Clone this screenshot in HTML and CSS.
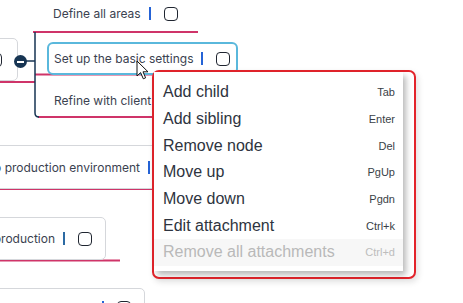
FILE: index.html
```html
<!DOCTYPE html>
<html lang="en">
<head>
  <meta charset="UTF-8">
  <title>Mind map</title>
  <link rel="stylesheet" href="styles.css">
</head>
<body>
  <div class="canvas">
    <!-- connectors -->
    <svg class="links" width="463" height="303" viewBox="0 0 463 303">
      <path class="link-pink" d="M0 82 H35" />
      <path class="link-pink" d="M33 32 H198" />
      <path class="link-pink" d="M35 74.5 H238" />
      <path class="link-pink" d="M38 117 H230" />
      <path class="link-pink" d="M0 189 H200" />
      <path class="link-pink" d="M0 260.5 H120" />
      <path class="link-dark" d="M26 61 H35" />
      <path class="link-dark" d="M35 32 V113 Q35 117 39 117" />
    </svg>

    <div class="node root">
      <span class="label">Website project</span>
      <span class="caret"></span>
      <span class="check"></span>
    </div>
    <div class="fold"></div>

    <div class="node child node-define">
      <span class="label">Define all areas</span>
      <span class="caret"></span>
      <span class="check"></span>
    </div>
    <div class="node child node-setup selected">
      <span class="label">Set up the basic settings</span>
      <span class="caret"></span>
      <span class="check"></span>
    </div>
    <div class="node child node-refine">
      <span class="label">Refine with client</span>
      <span class="caret"></span>
      <span class="check"></span>
    </div>

    <div class="node l1 node-env">
      <span class="label">Deploy to production environment</span>
      <span class="caret"></span>
      <span class="check"></span>
    </div>
    <div class="node l1 node-prod">
      <span class="label">Test in production</span>
      <span class="caret"></span>
      <span class="check"></span>
    </div>
    <div class="node l1 node-last">
      <span class="label">Hand the backups to the client over secure servers</span>
      <span class="caret"></span>
      <span class="check"></span>
    </div>

    <svg class="pointer" width="14" height="21" viewBox="0 0 14 21">
      <path d="M1 1 V16 L4.6 12.6 L7.3 18.8 L9.6 17.8 L7 11.8 L12 11.8 Z" />
    </svg>

    <div class="menu-wrap">
      <ul class="menu">
        <li class="menu-item"><span>Add child</span><span class="key">Tab</span></li>
        <li class="menu-item"><span>Add sibling</span><span class="key">Enter</span></li>
        <li class="menu-item"><span>Remove node</span><span class="key">Del</span></li>
        <li class="menu-item"><span>Move up</span><span class="key">PgUp</span></li>
        <li class="menu-item"><span>Move down</span><span class="key">Pgdn</span></li>
        <li class="menu-item"><span>Edit attachment</span><span class="key">Ctrl+k</span></li>
        <li class="menu-item disabled"><span>Remove all attachments</span><span class="key">Ctrl+d</span></li>
      </ul>
    </div>
  </div>
</body>
</html>
```

FILE: styles.css
```css
:root {
  --pink: #cf3469;
  --navy: #173553;
  --text-color: #3b4250;
  --caret: #2563d6;
  --node-border: #d5d7db;
  --menu-red: #e3242b;
}

body {
  margin: 0;
  background: #ffffff;
  font-family: Inter, "Noto Sans", sans-serif;
}

.canvas {
  position: relative;
  width: 463px;
  height: 303px;
  overflow: hidden;
  background: #ffffff;
}

.links {
  position: absolute;
  top: 0;
  left: 0;
}

.link-pink {
  fill: none;
  stroke: var(--pink);
  stroke-width: 2;
}

.link-dark {
  fill: none;
  stroke: var(--navy);
  stroke-width: 1.5;
}

/* nodes */
.node {
  position: absolute;
  display: flex;
  align-items: center;
  box-sizing: border-box;
  white-space: nowrap;
  font-size: 12px;
  color: var(--text-color);
  background: #ffffff;
}

.caret {
  width: 2px;
  height: 13px;
  margin-left: 8px;
  background: var(--caret);
}

.check {
  width: 14px;
  height: 14px;
  margin-left: 13px;
  box-sizing: border-box;
  border: 1.5px solid #1f2530;
  border-radius: 4px;
}

.child {
  height: 33px;
  padding: 0 6px 0 5px;
  border: 2px solid transparent;
  border-radius: 6px;
}

.node-define {
  left: 46px;
  top: -3px;
  background: transparent;
}

.node-setup {
  left: 47px;
  top: 42px;
  width: 191px;
}

.node-refine {
  left: 47px;
  top: 84px;
  background: transparent;
}

.selected {
  border-color: #5ab8dc;
}

.l1 {
  padding: 0 13px;
  border: 1px solid var(--node-border);
  border-radius: 5px;
}

.root {
  right: 445px;
  top: 38px;
  height: 43px;
  padding: 0 15px;
  border: 1px solid var(--node-border);
  border-radius: 5px;
}

.node-env {
  right: 272px;
  top: 145px;
  height: 44px;
}

.node-prod {
  right: 357px;
  top: 217px;
  height: 43px;
}

.node-prod .caret {
  background: #2c6aa3;
}

.node-last {
  right: 318px;
  top: 288px;
  height: 39px;
}

.fold {
  position: absolute;
  left: 14px;
  top: 55px;
  width: 13px;
  height: 13px;
  border-radius: 50%;
  background: var(--navy);
}

.fold:before {
  content: "";
  position: absolute;
  left: 3px;
  top: 5.5px;
  width: 7px;
  height: 2px;
  background: #ffffff;
}

.pointer {
  position: absolute;
  left: 136px;
  top: 60px;
}

.pointer path {
  fill: #ffffff;
  stroke: #111111;
  stroke-width: 1;
  stroke-linejoin: round;
}

/* context menu */
.menu-wrap {
  position: absolute;
  left: 152px;
  top: 70px;
  width: 264px;
  height: 209px;
  box-sizing: border-box;
  border: 2px solid var(--menu-red);
  border-radius: 7px;
  background: #ffffff;
  box-shadow: 2px 3px 6px rgba(0, 0, 0, 0.12);
}

.menu {
  list-style: none;
  margin: 0;
  padding: 7px 0 5px;
  width: 249px;
  height: 199px;
  box-sizing: border-box;
  background: #ffffff;
  box-shadow: 3px 4px 6px rgba(0, 0, 0, 0.28);
  font-family: "Liberation Sans", Arial, sans-serif;
}

.menu-item {
  display: flex;
  justify-content: space-between;
  align-items: center;
  height: 26.7px;
  padding: 0 8px 0 9px;
  font-size: 16px;
  color: #2e3440;
}

.key {
  font-size: 11px;
  color: #3a3f47;
}

.disabled {
  background: #f7f7f7;
  color: #b9b9b9;
}

.disabled .key {
  color: #bdbdbd;
}
```
